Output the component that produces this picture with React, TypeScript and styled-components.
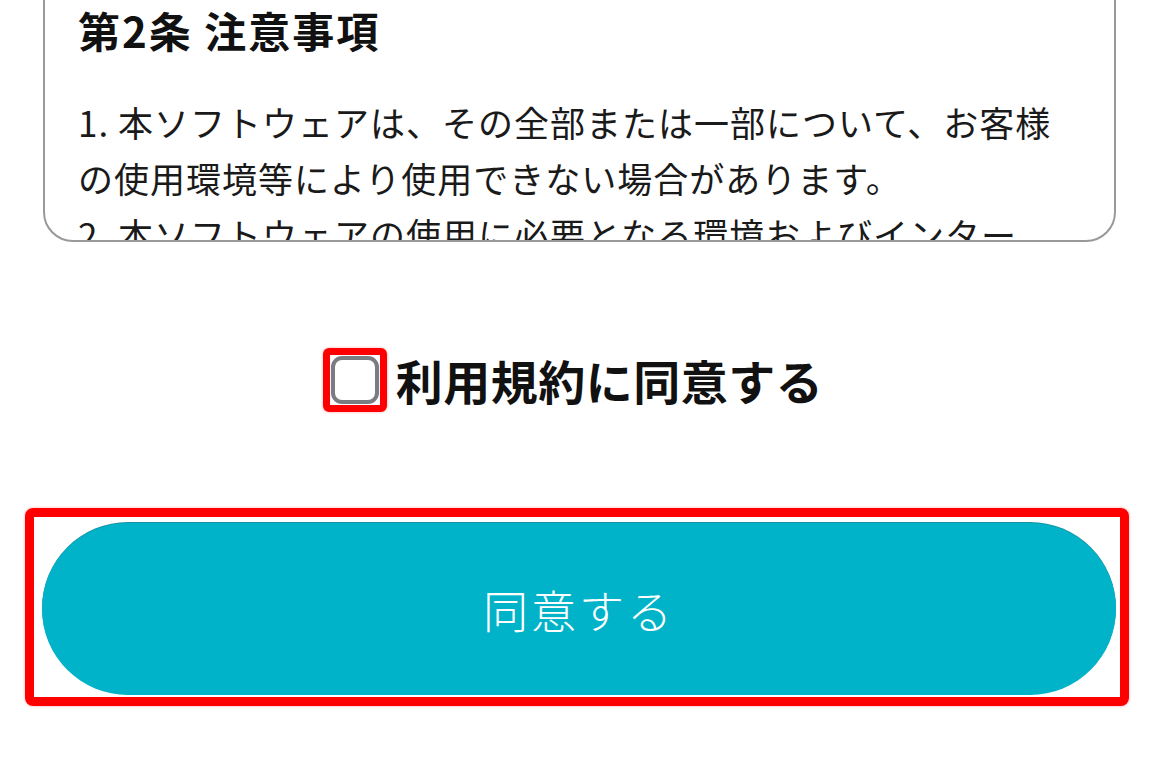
import styled, { createGlobalStyle } from "styled-components";
import { useState } from "react";

const GlobalStyle = createGlobalStyle`
  html, body {
    margin: 0;
    padding: 0;
    background: #ffffff;
  }
  body {
    font-family: "Noto Sans CJK JP", "Noto Sans", sans-serif;
    color: #111111;
    overflow: hidden;
  }
`;

const Page = styled.div`
  width: 1160px;
  height: 760px;
  display: flex;
  flex-direction: column;
  align-items: stretch;
`;

const TermsBox = styled.div`
  margin: -40px 44px 0 43px;
  height: 282px;
  box-sizing: border-box;
  border: 2px solid #999999;
  border-radius: 0 0 30px 30px;
  padding: 40px 41px 0 33px;
  overflow: hidden;
`;

const ArticleTitle = styled.h2`
  margin: 0 0 36px;
  font-size: 42px;
  line-height: 56px;
  font-weight: 700;
  letter-spacing: 2px;
  color: #111111;
`;

const ArticleText = styled.p`
  margin: 0;
  font-size: 35px;
  line-height: 56px;
  font-weight: 400;
  letter-spacing: 1px;
  color: #1a1a1a;
`;

const NoBreak = styled.span`
  white-space: nowrap;
`;

const AgreeRow = styled.label`
  margin-top: 106px;
  display: flex;
  align-items: center;
  justify-content: center;
  gap: 9px;
  padding-right: 14px;
  cursor: pointer;
`;

const Highlight = styled.span`
  display: flex;
  align-items: center;
  justify-content: center;
  width: 64px;
  height: 64px;
  box-sizing: border-box;
  border: 7px solid #ff0000;
  border-radius: 6px;
  box-shadow: 0 0 3px rgba(255, 0, 0, 0.35);
`;

const CheckBox = styled.input`
  appearance: none;
  margin: 0;
  width: 48px;
  height: 48px;
  box-sizing: border-box;
  border: 4px solid #7b7b82;
  border-radius: 11px;
  background: #ffffff;
  cursor: pointer;

  &:checked {
    background: #00b3c8;
    border-color: #00b3c8;
  }
`;

const AgreeText = styled.span`
  font-size: 47px;
  line-height: 64px;
  font-weight: 700;
  letter-spacing: 0.5px;
  color: #111111;
`;

const ButtonFrame = styled.div`
  margin: 96px 31px 0 25px;
  border: 9px solid #ff0000;
  border-radius: 8px;
  padding: 6px 4px 2px 8px;
  box-shadow: 0 0 3px rgba(255, 0, 0, 0.35);
`;

const AgreeButton = styled.button`
  display: flex;
  align-items: center;
  justify-content: center;
  width: 100%;
  height: 172px;
  border: none;
  border-radius: 86px;
  background: #00b3c8;
  box-shadow: 0 -1px 0 #1494a3;
  color: #ffffff;
  font-family: "Noto Sans CJK JP", "Noto Sans", sans-serif;
  font-size: 45px;
  font-weight: 300;
  letter-spacing: 3px;
  cursor: pointer;
`;

export default function App() {
  const [agreed, setAgreed] = useState(false);

  return (
    <>
      <GlobalStyle />
      <Page>
        <TermsBox>
          <ArticleTitle>第2条 注意事項</ArticleTitle>
          <ArticleText>
            1. 本ソフトウェアは、その全部または一部について、お客様の使用環境等により使用できない場合があります。
          </ArticleText>
          <ArticleText>
            2. 本ソフトウェアの使用に必要となる環境およびインター<NoBreak>ネット</NoBreak>接続環境は、お客様の責任と費用負担で準備するものとします。
          </ArticleText>
        </TermsBox>

        <AgreeRow>
          <Highlight>
            <CheckBox
              type="checkbox"
              checked={agreed}
              onChange={(e) => setAgreed(e.target.checked)}
            />
          </Highlight>
          <AgreeText>利用規約に同意する</AgreeText>
        </AgreeRow>

        <ButtonFrame>
          <AgreeButton type="button">同意する</AgreeButton>
        </ButtonFrame>
      </Page>
    </>
  );
}
